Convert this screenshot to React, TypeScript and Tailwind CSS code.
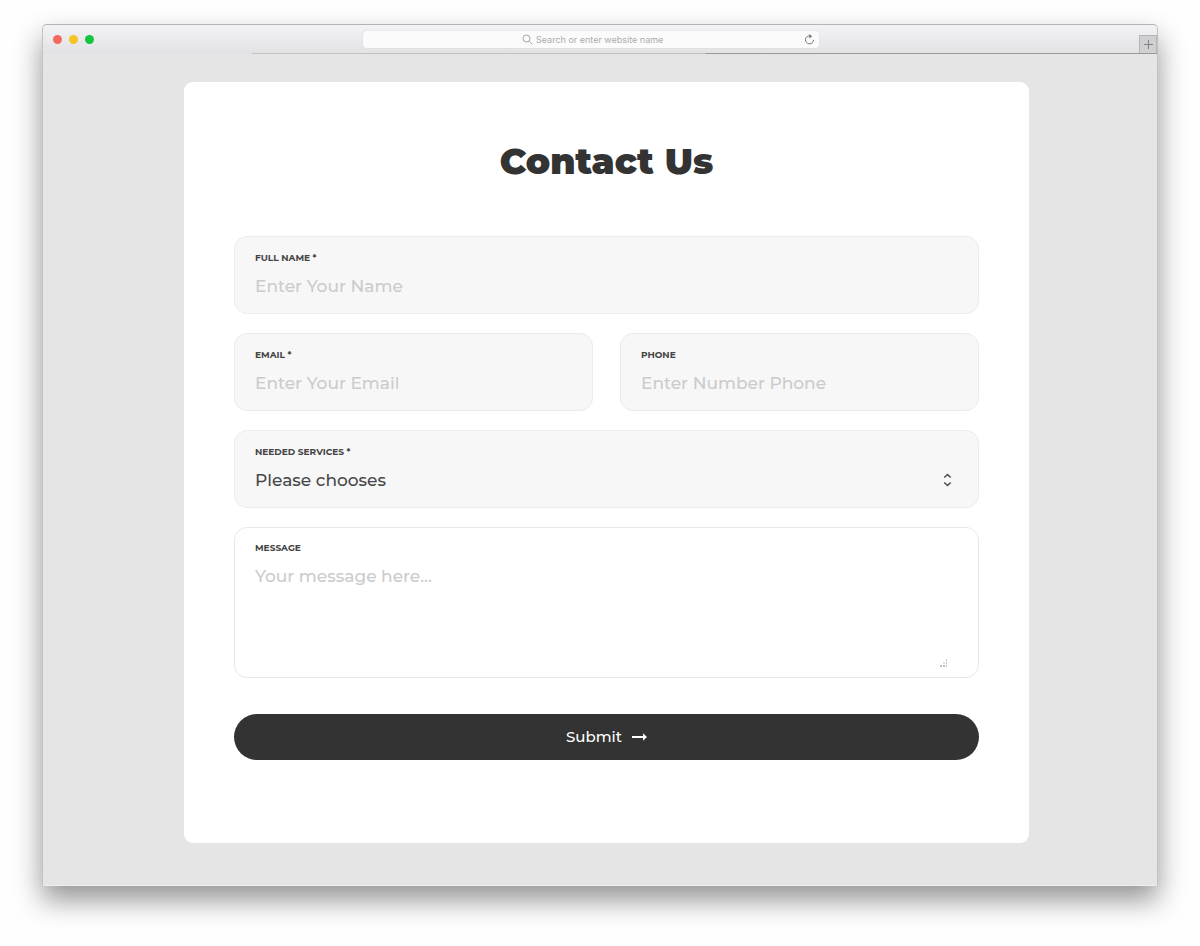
import type { ReactNode } from "react";

const control =
  "block w-full appearance-none bg-transparent p-0 text-[17px] font-medium leading-6 text-[#484848] outline-none placeholder:text-[#cbcbcb] placeholder:opacity-100";

const caption = "mb-2 block text-[9px] font-bold uppercase leading-4 text-[#444444]";

function Field({ id, label, children }: { id: string; label: string; children: ReactNode }) {
  return (
    <div className="h-[78px] rounded-[13px] border border-[#ebebeb] bg-[#f7f7f7] px-5 pt-[13px]">
      <label htmlFor={id} className={caption}>
        {label}
      </label>
      {children}
    </div>
  );
}

function TitleBar() {
  return (
    <header className="relative flex h-[30px] items-center rounded-t-[4px] border-t border-[#b4b4b4] bg-gradient-to-b from-[#f3f3f5] to-[#e2e2e5]">
      <div className="flex flex-1 gap-[7px] pl-[10px]">
        <span className="size-[9px] rounded-full bg-[#f36b60]" />
        <span className="size-[9px] rounded-full bg-[#f6c525]" />
        <span className="size-[9px] rounded-full bg-[#12c63d]" />
      </div>
      <div className="flex h-[17px] w-[456px] items-center rounded-[3px] bg-[#fbfbfb] shadow-[0_0_1px_#bbbbbb]">
        <svg className="ml-[159px] size-[11px] shrink-0 text-[#a6a6a6]" viewBox="0 0 11 11" fill="none" stroke="currentColor" aria-hidden="true">
          <circle cx="4.5" cy="4.5" r="3.5" />
          <path d="M7.1 7.1L10.3 10.3" />
        </svg>
        <input
          type="text"
          aria-label="Search or enter website name"
          placeholder="Search or enter website name"
          className="ml-[3px] min-w-0 flex-1 bg-transparent p-0 font-[Inter,sans-serif] text-[9px] leading-4 text-[#777777] outline-none placeholder:text-[#acacac] placeholder:opacity-100"
        />
        <button type="button" aria-label="Reload" className="mr-1 text-[#777777]">
          <svg className="size-[11px]" viewBox="0 0 11 11" fill="none" stroke="currentColor" aria-hidden="true">
            <path d="M6.2 1.9A4 4 0 1 0 9.5 5.8" />
            <path d="M5.2 0L8.2 2.2L5.3 4.4Z" fill="currentColor" stroke="none" />
          </svg>
        </button>
      </div>
      <div className="flex flex-1 items-end justify-end self-stretch pl-7">
        <button
          type="button"
          aria-label="New tab"
          className="flex h-[19px] w-[18px] items-center justify-center border border-[#b5b5b7] bg-[#d0d0d2] text-[#808082]"
        >
          <svg className="size-[9px]" viewBox="0 0 9 9" stroke="currentColor" aria-hidden="true">
            <path d="M4.5 0V9M0 4.5H9" />
          </svg>
        </button>
      </div>
      <div className="absolute bottom-0 left-[209px] right-0 flex h-px">
        <span className="flex-1 bg-[#c2c2c2]" />
        <span className="flex-1 bg-[#9b9993]" />
      </div>
    </header>
  );
}

export default function App() {
  return (
    <div className="bg-[#fefefe] px-[42px] pb-[60px] pt-6 font-[Montserrat,Inter,sans-serif]">
      <div className="rounded-t-[5px] border-x border-[#c3c3c3] bg-[#e5e5e5] shadow-[0_14px_28px_0_rgba(0,0,0,0.42)]">
        <TitleBar />
        <main className="border-b border-[#eeeeee] pb-[42px] pl-[13px] pt-7">
          <form
            onSubmit={(event) => event.preventDefault()}
            className="mx-auto max-w-[845px] rounded-[9px] bg-white px-[50px] pb-[83px] pt-[54px]"
          >
            <h1 className="text-center text-[36px] font-black leading-[50px] text-[#333333]">Contact Us</h1>
            <div className="mt-[50px] flex flex-col gap-[19px]">
              <Field id="name" label="Full Name *">
                <input id="name" type="text" placeholder="Enter Your Name" className={control} />
              </Field>
              <div className="grid grid-cols-2 gap-[27px]">
                <Field id="email" label="Email *">
                  <input id="email" type="email" placeholder="Enter Your Email" className={control} />
                </Field>
                <Field id="phone" label="Phone">
                  <input id="phone" type="tel" placeholder="Enter Number Phone" className={control} />
                </Field>
              </div>
              <Field id="services" label="Needed Services *">
                <div className="relative">
                  <select id="services" className={control}>
                    <option>Please chooses</option>
                    <option>Online Services</option>
                    <option>eCommerce Business</option>
                  </select>
                  <svg
                    className="pointer-events-none absolute right-[6px] top-[5px] h-[14px] w-[9px] text-[#505050]"
                    viewBox="0 0 9 14"
                    fill="none"
                    stroke="currentColor"
                    strokeWidth="1.5"
                    aria-hidden="true"
                  >
                    <path d="M1.2 4.5L4.5 1.6L7.8 4.5M1.2 9.5L4.5 12.4L7.8 9.5" />
                  </svg>
                </div>
              </Field>
              <div className="relative rounded-[13px] border border-[#e8e8e8] bg-white px-5 pb-[13px] pt-3">
                <label htmlFor="message" className={caption}>
                  Message
                </label>
                <textarea id="message" placeholder="Your message here..." className={`${control} h-[100px] resize-none`} />
                <svg className="pointer-events-none absolute bottom-[10px] right-[30px] size-2 text-[#c0c0c0]" viewBox="0 0 8 8" fill="currentColor" aria-hidden="true">
                  <path d="M0 6h2v2H0zM3 6h2v2H3zM6 6h1v2H6zM3.5 3h1v2h-1zM6 3h1v2H6zM6 0h1v2H6z" />
                </svg>
              </div>
            </div>
            <button
              type="submit"
              className="mt-9 flex h-[46px] w-full items-center justify-center gap-[10px] rounded-full bg-[#333333] text-[15px] font-medium text-white"
            >
              Submit
              <svg className="h-[8px] w-[15px]" viewBox="0 0 15 8" aria-hidden="true">
                <path d="M0 3H11V0.3L15 4L11 7.7V5H0Z" fill="currentColor" />
              </svg>
            </button>
          </form>
        </main>
      </div>
    </div>
  );
}
